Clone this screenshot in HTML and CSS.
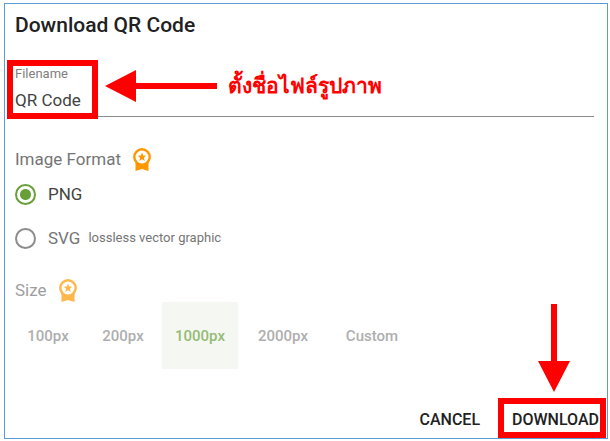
FILE: index.html
```html
<!doctype html>
<html lang="en">
<head>
<meta charset="utf-8">
<title>Download QR Code</title>
<link rel="stylesheet" href="styles.css">
</head>
<body>
<svg class="defs" width="0" height="0">
	<symbol id="badge" viewBox="0 0 18 23">
		<path fill="#ff9800" d="M2.500 14v9l6.500-2 6.500 2v-9z"/>
		<circle cx="9" cy="9" r="7.700" fill="#fff" stroke="#ff9800" stroke-width="2.400"/>
		<path fill="#ff9800" d="M9 4.600l1.200 2.900 3.100.3-2.400 2 .8 3.100L9 11.200l-2.700 1.700.8-3.100-2.400-2 3.100-.3z"/>
	</symbol>
</svg>
<form class="dialog">
	<h1 class="title">Download QR Code</h1>

	<div class="field">
		<label for="filename">Filename</label>
		<input type="text" id="filename" value="QR Code">
		<span class="mark mark-name"></span>
		<div class="note">
			<svg width="112" height="32" viewBox="0 0 112 32"><path fill="#f00" d="M0 16L31 0v13h81v6H31v13z"/></svg>
			<span lang="th">ตั้งชื่อไฟล์รูปภาพ</span>
		</div>
	</div>

	<div class="head">Image Format <svg class="badge"><use href="#badge"/></svg></div>
	<div class="formats">
		<label class="radio on"><input type="radio" name="format" checked>PNG</label>
		<label class="radio"><input type="radio" name="format">SVG <small>lossless vector graphic</small></label>
	</div>

	<div class="size">
		<div class="head">Size <svg class="badge"><use href="#badge"/></svg></div>
		<div class="sizes">
			<button type="button">100px</button>
			<button type="button">200px</button>
			<button type="button" class="ac">1000px</button>
			<button type="button">2000px</button>
			<button type="button">Custom</button>
		</div>
	</div>

	<div class="actions">
		<button type="button">CANCEL</button>
		<button type="button" class="download">DOWNLOAD
			<svg class="arrow-down" width="32" height="88" viewBox="0 0 32 88"><path fill="#f00" d="M13 0h6v57h13L16 88 0 57h13z"/></svg>
			<span class="mark mark-download"></span>
		</button>
	</div>
</form>
</body>
</html>
```
FILE: styles.css
```css
*{ margin:0; padding:0; box-sizing:border-box;}
body{ padding:3px 2px 2px 4px; background:#fff; font-family:Roboto, "Liberation Sans", sans-serif; font-size:17px; line-height:24px; color:#212121;}
button, input{ font:inherit; color:inherit; border:0; background:none;}
button{ cursor:pointer;}
.defs{ position:absolute;}
.dialog{ display:flex; flex-direction:column; border:1px solid #5b9bd5; padding:9px 13px 0 10px;}
.title{ font-size:21px; font-weight:500; line-height:24px;}

/* filename */
.field{ position:relative; display:flex; flex-direction:column; gap:6px; margin-top:29px; border-bottom:1px solid #8c8c8c; padding-bottom:4px;}
.field label{ font-size:13px; line-height:16px; color:#808080;}
.field input{ width:100%; height:24px; color:#424242; outline:none;}

/* red marks */
.mark{ position:absolute; border:6px solid #f00; pointer-events:none;}
.mark-name{ left:-8px; top:-6px; width:91px; height:59px;}
.note{ position:absolute; left:90px; top:4px; display:flex; align-items:center; gap:11px; color:#f00; font-family:"Liberation Serif", serif; font-size:21px; font-weight:bold; line-height:32px; white-space:nowrap;}

.head{ display:flex; align-items:center; gap:12px; height:24px; margin-top:30px; color:#757575;}
.badge{ width:18px; height:23px;}

/* format */
.formats{ display:flex; flex-direction:column; gap:20px; margin-top:11px;}
.radio{ display:flex; align-items:center; gap:12px; color:#757575;}
.radio.on{ color:#424242;}
.radio input{ appearance:none; width:21px; height:21px; border:2px solid #8c8c8c; border-radius:50%;}
.radio input:checked{ border-color:#689f38; background:radial-gradient(circle, #689f38 5px, transparent 6px);}
.radio small{ margin-left:-4px; font-size:13px;}

/* size */
.size{ opacity:.7;}
.size .head{ margin-top:28px;}
.sizes{ display:grid; grid-template-columns:72px 72px 76px 84px 88px; gap:3px; margin:0 0 0 -3px;}
.sizes button{ height:67px; font-size:15px; font-weight:500; color:#8c8c8c;}
.sizes .ac{ color:#689f38; background:#f1f5ee;}

.actions{ display:flex; justify-content:flex-end; gap:32px; margin:36px -5px 0 0; padding-bottom:3px;}
.actions button{ height:30px; font-size:16px; font-weight:500;}
.download{ position:relative;}
.mark-download{ left:-14px; right:-7px; top:-7px; height:40px;}
.arrow-down{ position:absolute; left:26px; top:-101px;}
```
